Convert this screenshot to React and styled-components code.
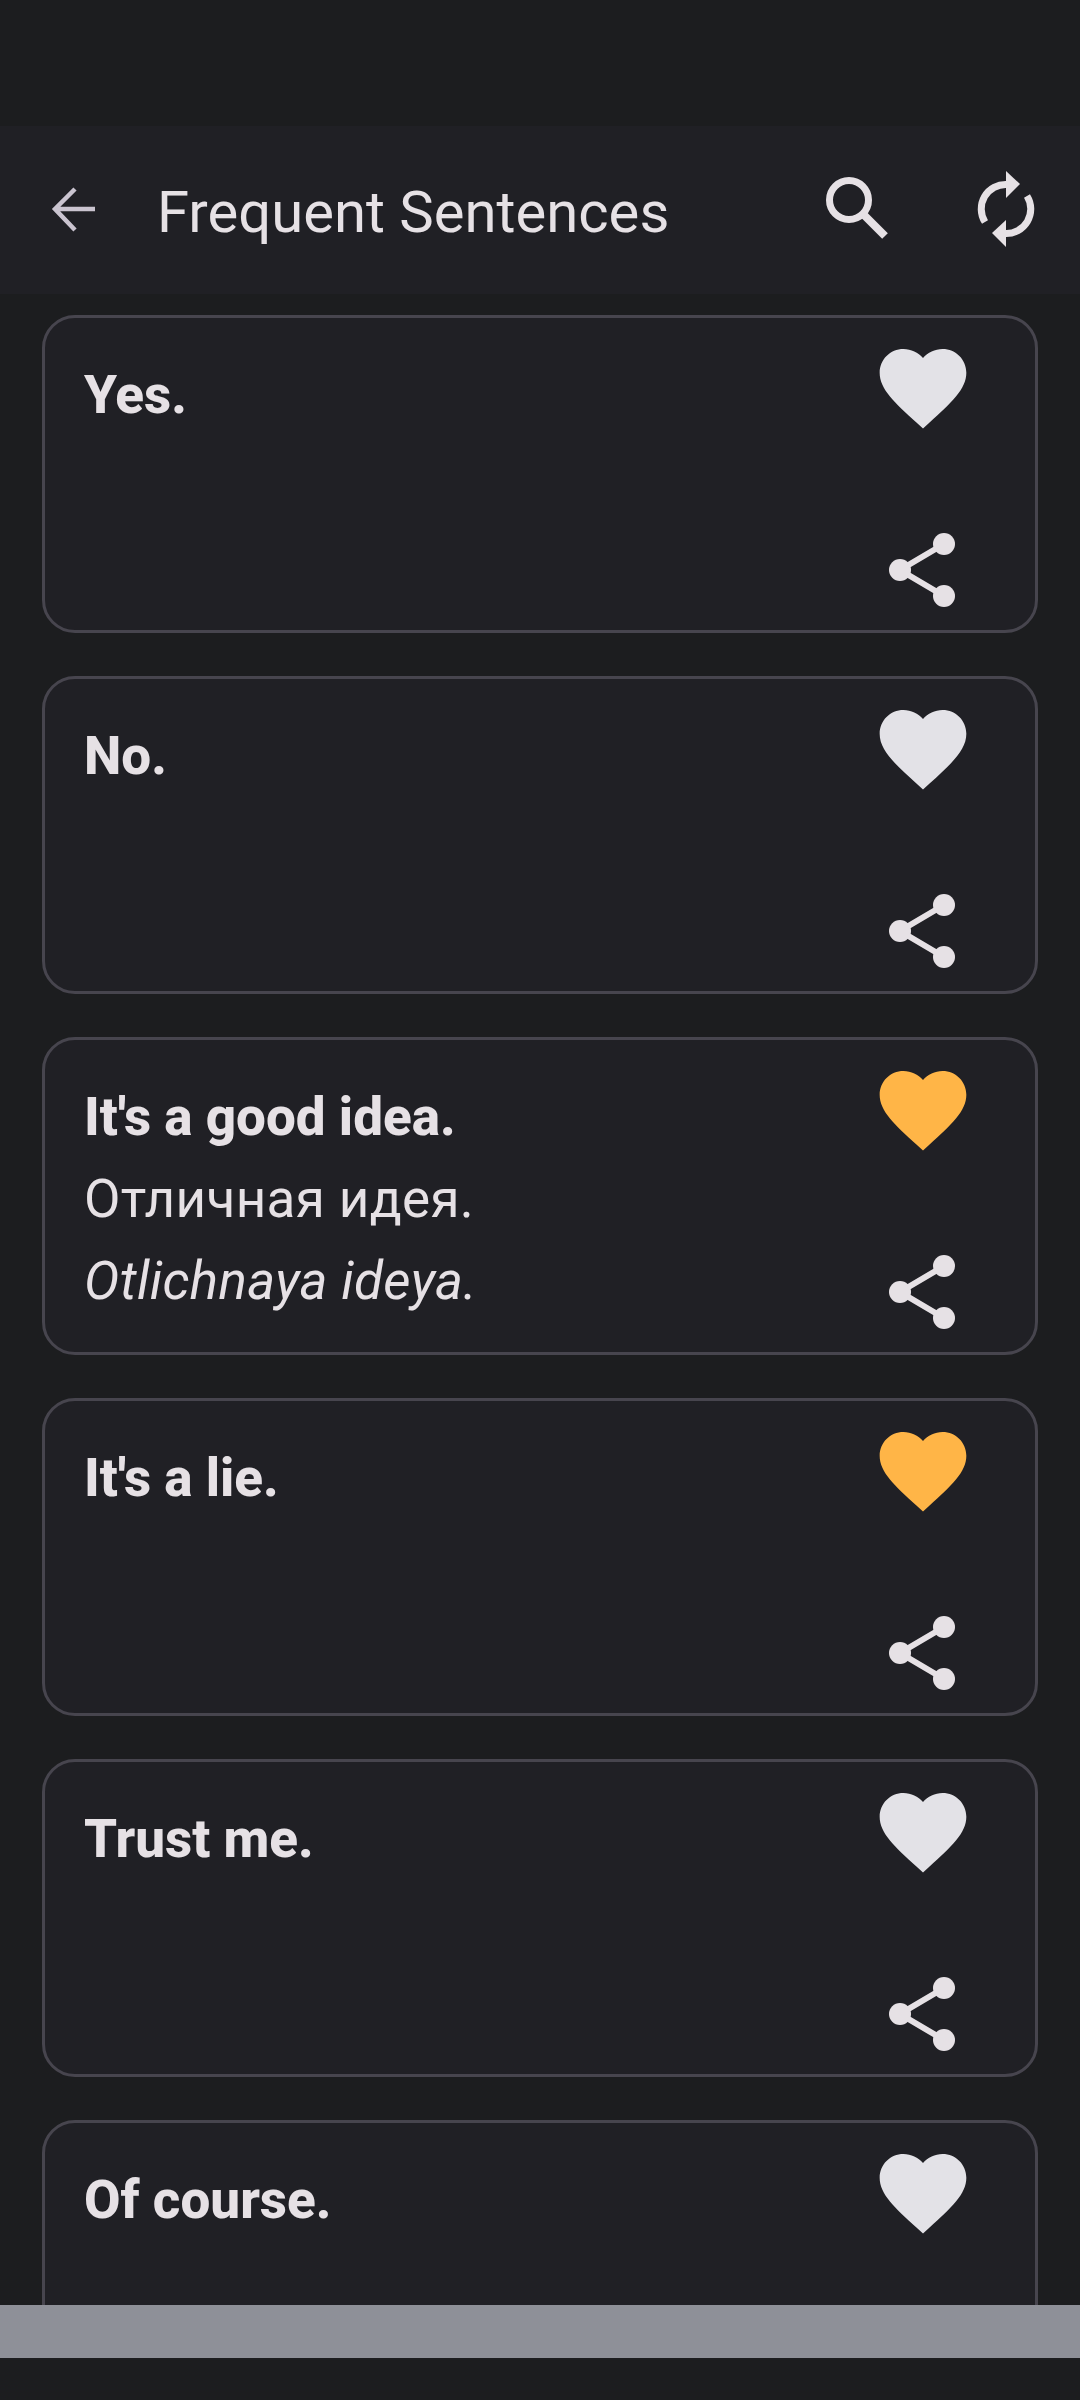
import React from 'react'
import styled, { createGlobalStyle } from 'styled-components'

const GlobalStyle = createGlobalStyle`
  html, body {
    margin: 0;
    padding: 0;
    background: #1c1d1f;
  }
`

const sentences = [
  { text: 'Yes.' },
  { text: 'No.' },
  { text: "It's a good idea.", translation: 'Отличная идея.', transcription: 'Otlichnaya ideya.', liked: true },
  { text: "It's a lie.", liked: true },
  { text: 'Trust me.' },
  { text: 'Of course.' },
]

const BackIcon = () => (
  <BackSvg viewBox="0 0 48 48" fill="none" stroke="#cac4d0" strokeWidth="4.5">
    <path d="M46 24H6M26 4 6 24l20 21" />
  </BackSvg>
)

const SearchIcon = () => (
  <SearchSvg viewBox="0 0 62 62" fill="none" stroke="#e6e1e5" strokeWidth="7">
    <circle cx="23" cy="23" r="19.5" />
    <path d="M38 38 59 59" strokeWidth="8" />
  </SearchSvg>
)

const SyncIcon = () => (
  <svg width="64" height="80" viewBox="0 0 64 80" fill="#e6e1e5">
    <path d="M32 1 46 14 32 28Z" />
    <path d="M32 50 18 63 32 77Z" />
    <path d="M33 14.5A24.5 24.5 0 0 0 11 52" fill="none" stroke="#e6e1e5" strokeWidth="7" />
    <path d="M31 63.5A24.5 24.5 0 0 0 53 26" fill="none" stroke="#e6e1e5" strokeWidth="7" />
  </svg>
)

const HeartIcon = ({ color }) => (
  <svg width="104" height="104" viewBox="0 0 24 24" fill={color}>
    <path d="M12 21.35l-1.45-1.32C5.4 15.36 2 12.28 2 8.5 2 5.42 4.42 3 7.5 3c1.74 0 3.41.81 4.5 2.09C13.09 3.81 14.76 3 16.5 3 19.58 3 22 5.42 22 8.5c0 3.78-3.4 6.86-8.55 11.54L12 21.35z" />
  </svg>
)

const ShareIcon = () => (
  <svg width="66" height="74" viewBox="0 0 66 74" fill="#e6e1e5">
    <path d="M55 11 11 37 55 63" fill="none" stroke="#e6e1e5" strokeWidth="6" />
    <circle cx="55" cy="11" r="11" />
    <circle cx="11" cy="37" r="11" />
    <circle cx="55" cy="63" r="11" />
  </svg>
)

const App = () => {
  return (
    <Screen>
      <GlobalStyle />
      <StatusSpace />
      <Toolbar>
        <BackIcon />
        <Title>Frequent Sentences</Title>
        <ToolbarActions>
          <SearchIcon />
          <SyncIcon />
        </ToolbarActions>
      </Toolbar>
      <List>
        {sentences.map((item) => (
          <Card key={item.text}>
            <Texts>
              <Sentence>{item.text}</Sentence>
              {item.translation && <Translation>{item.translation}</Translation>}
              {item.transcription && <Transcription>{item.transcription}</Transcription>}
            </Texts>
            <CardActions>
              <HeartIcon color={item.liked ? '#ffb547' : '#e3e2e7'} />
              <ShareSlot>
                <ShareIcon />
              </ShareSlot>
            </CardActions>
          </Card>
        ))}
      </List>
      <BottomBar />
      <BottomSpace />
    </Screen>
  )
}

const Screen = styled.div`
  width: 1080px;
  height: 2400px;
  display: flex;
  flex-direction: column;
  overflow: hidden;
  background: #1c1d1f;
  font-family: Roboto, "Noto Sans", sans-serif;
  color: #e6e1e5;
`

const StatusSpace = styled.div`
  height: 126px;
  flex: none;
`

const Toolbar = styled.header`
  height: 168px;
  flex: none;
  display: flex;
  align-items: center;
  background: #202025;
  padding: 0 42px 0 49px;
  box-sizing: border-box;
`

const BackSvg = styled.svg`
  width: 48px;
  height: 48px;
  flex: none;
  margin-top: -2px;
`

const Title = styled.h1`
  margin: 4px 0 0 60px;
  flex: 1;
  font-size: 58px;
  font-weight: 400;
  line-height: 70px;
`

const ToolbarActions = styled.div`
  display: flex;
  align-items: center;
  gap: 86px;
`

const SearchSvg = styled.svg`
  width: 62px;
  height: 62px;
  margin-top: -4px;
`

const List = styled.main`
  flex: 1;
  min-height: 0;
  overflow: hidden;
  display: flex;
  flex-direction: column;
  gap: 43px;
  padding: 21px 42px 0;
`

const Card = styled.article`
  height: 318px;
  flex: none;
  box-sizing: border-box;
  display: flex;
  justify-content: space-between;
  background: #202025;
  border: 3px solid #47454e;
  border-radius: 33px;
  padding: 18px 60px 23px 39px;
`

const Texts = styled.div`
  display: flex;
  flex-direction: column;
  padding-top: 18px;
`

const Sentence = styled.div`
  font-size: 53px;
  font-weight: 800;
  line-height: 82px;
`

const Translation = styled.div`
  font-size: 53px;
  font-weight: 400;
  line-height: 82px;
  letter-spacing: 0.35px;
`

const Transcription = styled(Translation)`
  font-style: italic;
`

const CardActions = styled.div`
  width: 104px;
  display: flex;
  flex-direction: column;
  justify-content: space-between;
  align-items: center;
`

const ShareSlot = styled.div`
  display: flex;
  margin-left: -2px;
`

const BottomBar = styled.div`
  height: 53px;
  flex: none;
  background: #8e9098;
`

const BottomSpace = styled.div`
  height: 42px;
  flex: none;
`

export default App
